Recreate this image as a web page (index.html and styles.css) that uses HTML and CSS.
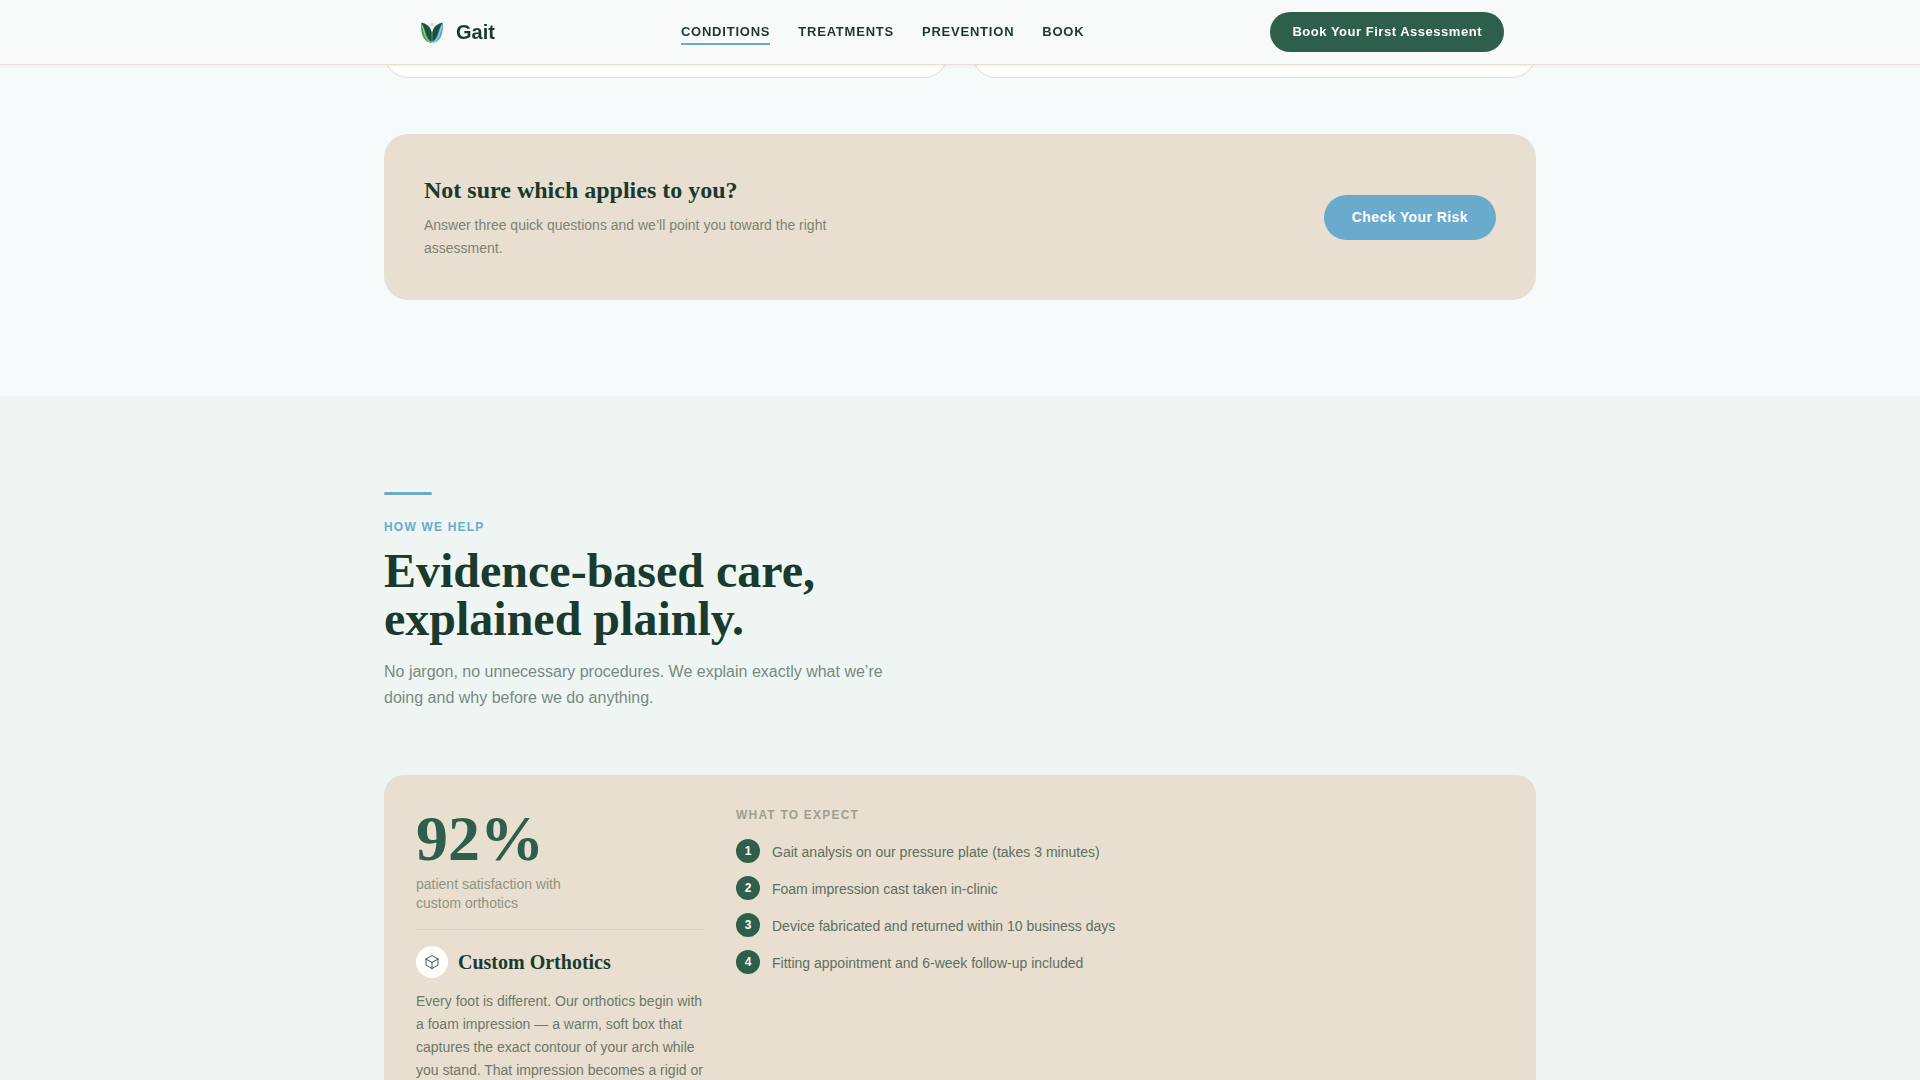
FILE: index.html
```html
<!DOCTYPE html>
<html lang="en">
<head>
<meta charset="utf-8">
<meta name="viewport" content="width=device-width, initial-scale=1">
<title>Gait</title>
<link rel="stylesheet" href="styles.css">
</head>
<body>
<header class="site-header">
  <div class="header-inner">
    <a class="brand" href="#">
      <svg class="brand-mark" viewBox="0 0 32 32" aria-hidden="true">
        <circle cx="16" cy="8.5" r="2" fill="#d5dcdb"/>
        <path d="M5 7L15.700 17V27C8 26.500 4.500 19 5 7Z" fill="#4f9a56"/>
        <path d="M27 7L16.300 17V27C24 26.500 27.500 19 27 7Z" fill="#58a8dc"/>
        <path d="M5 6.500C11 7.500 14.500 11 15.700 16V25.500C9 22 10.500 13 5 6.500Z" fill="#1b5238"/>
        <path d="M27 6.500C21 7.500 17.500 11 16.300 16V25.500C23 22 21.500 13 27 6.500Z" fill="#1b5238"/>
        <path d="M6 9.500C8.500 14 8 22 14 26M26 9.500C23.500 14 24 22 18 26" fill="none" stroke="#d9efe6" stroke-width=".7"/>
      </svg>
      <span>Gait</span>
    </a>
    <nav class="nav" aria-label="Main">
      <a class="nav-link is-active" href="#conditions">Conditions</a>
      <a class="nav-link" href="#treatments">Treatments</a>
      <a class="nav-link" href="#prevention">Prevention</a>
      <a class="nav-link" href="#book">Book</a>
    </nav>
    <button class="btn btn-book" type="button">Book Your First Assessment</button>
  </div>
</header>
<main class="page">
  <section class="conditions" id="conditions">
    <div class="container">
      <div class="condition-grid">
        <div class="condition-card"></div>
        <div class="condition-card"></div>
      </div>
      <div class="cta">
        <div class="cta-copy">
          <h3 class="cta-title">Not sure which applies to you?</h3>
          <p class="cta-text">Answer three quick questions and we’ll point you toward the right assessment.</p>
        </div>
        <button class="btn btn-risk" type="button">Check Your Risk</button>
      </div>
    </div>
  </section>
  <section class="treatments" id="treatments">
    <div class="container">
      <div class="accent-bar"></div>
      <p class="eyebrow">How we help</p>
      <h2 class="section-title">Evidence-based care, explained plainly.</h2>
      <p class="section-lead">No jargon, no unnecessary procedures. We explain exactly what we’re doing and why before we do anything.</p>
      <article class="treatment">
        <div class="treatment-main">
          <p class="stat">92%</p>
          <p class="stat-caption">patient satisfaction with custom orthotics</p>
          <div class="treatment-head">
            <span class="icon-circle">
              <svg class="icon" viewBox="0 0 24 24" fill="none" stroke="currentColor" stroke-width="1.500" stroke-linecap="round" stroke-linejoin="round" aria-hidden="true">
                <path d="M21 7.500l-9-5.250L3 7.500m18 0l-9 5.250m9-5.250v9l-9 5.250M3 7.500l9 5.250M3 7.500v9l9 5.250m0-9v9"/>
              </svg>
            </span>
            <h3 class="treatment-title">Custom Orthotics</h3>
          </div>
          <p class="treatment-text">Every foot is different. Our orthotics begin with a foam impression — a warm, soft box that captures the exact contour of your arch while you stand. That impression becomes a rigid or</p>
        </div>
        <div class="treatment-steps">
          <h4 class="steps-label">What to expect</h4>
          <ol class="steps">
            <li class="step"><span class="step-number">1</span><span class="step-text">Gait analysis on our pressure plate (takes 3 minutes)</span></li>
            <li class="step"><span class="step-number">2</span><span class="step-text">Foam impression cast taken in-clinic</span></li>
            <li class="step"><span class="step-number">3</span><span class="step-text">Device fabricated and returned within 10 business days</span></li>
            <li class="step"><span class="step-number">4</span><span class="step-text">Fitting appointment and 6-week follow-up included</span></li>
          </ol>
        </div>
      </article>
    </div>
  </section>
</main>
</body>
</html>
```
FILE: styles.css
```css
:root {
  --forest: #1a3a2e;
  --green: #2d5f4a;
  --sky: #6aabcd;
  --sand: #e8dfd0;
  --line: #e5e0d5;
  --mist: #f7fafb;
  --mint: #eef5f3;
  --sans: "Liberation Sans", Arial, sans-serif;
  --serif: "Liberation Serif", Georgia, serif;
}

* { box-sizing: border-box; }

body {
  margin: 0;
  background: var(--mist);
  color: var(--forest);
  font-family: var(--sans);
}

h2, h3, h4, p, ol { margin: 0; padding: 0; }

.page {
  height: 100vh;
  overflow-y: auto;
  scrollbar-width: none;
}

.container {
  max-width: 1152px;
  margin: 0 auto;
}

/* Header */
.site-header {
  position: fixed;
  inset: 0 0 auto 0;
  z-index: 10;
  background: #f8faf9;
  border-bottom: 1px solid var(--line);
  box-shadow: 0 1px 3px rgba(139, 115, 85, .12);
}

.header-inner {
  display: flex;
  align-items: center;
  justify-content: space-between;
  max-width: 1152px;
  height: 64px;
  margin: 0 auto;
  padding: 0 32px;
}

.brand {
  display: flex;
  align-items: center;
  gap: 8px;
  color: var(--forest);
  font-size: 20px;
  font-weight: 700;
  text-decoration: none;
}

.brand-mark { width: 32px; height: 32px; }

.nav { display: flex; gap: 28px; }

.nav-link {
  padding: 5px 0 3px;
  border-bottom: 2px solid transparent;
  color: var(--forest);
  font-size: 13px;
  font-weight: 700;
  line-height: 16px;
  letter-spacing: .06em;
  text-transform: uppercase;
  text-decoration: none;
}

.nav-link.is-active { border-bottom-color: var(--sky); }

.btn {
  border: 0;
  border-radius: 999px;
  color: #fff;
  font-family: var(--sans);
  font-weight: 700;
  cursor: pointer;
}

.btn-book {
  padding: 12px 22px 13px;
  background: var(--green);
  font-size: 13px;
  line-height: 15px;
  letter-spacing: .04em;
}

.btn-risk {
  flex-shrink: 0;
  height: 45px;
  padding: 0 28px;
  background: var(--sky);
  font-size: 14px;
  letter-spacing: .03em;
}

/* Conditions */
.conditions { padding-bottom: 96px; }

.condition-grid {
  display: grid;
  grid-template-columns: 1fr 1fr;
  gap: 24px;
  margin-bottom: 56px;
}

.condition-card {
  min-height: 78px;
  background: #fff;
  border: 1px solid var(--line);
  border-top: 0;
  border-radius: 0 0 24px 24px;
}

.cta {
  display: flex;
  align-items: center;
  justify-content: space-between;
  gap: 32px;
  padding: 40px;
  background: var(--sand);
  border-radius: 24px;
}

.cta-copy { max-width: 420px; }

.cta-title {
  margin-bottom: 8px;
  font-family: var(--serif);
  font-size: 24px;
  line-height: 32px;
}

.cta-text {
  color: #7b8472;
  font-size: 14px;
  line-height: 23px;
}

/* Treatments */
.treatments {
  padding: 96px 0;
  background: var(--mint);
}

.accent-bar {
  width: 48px;
  height: 3px;
  margin-bottom: 20px;
  background: var(--sky);
  border-radius: 2px;
}

.eyebrow {
  margin-bottom: 8px;
  color: var(--sky);
  font-size: 12px;
  font-weight: 700;
  line-height: 24px;
  letter-spacing: .1em;
  text-transform: uppercase;
}

.section-title {
  max-width: 520px;
  margin-bottom: 16px;
  font-family: var(--serif);
  font-size: 48px;
  line-height: 48px;
}

.section-lead {
  max-width: 520px;
  margin-bottom: 64px;
  color: #788a82;
  font-size: 16px;
  line-height: 26px;
}

.treatment {
  display: grid;
  grid-template-columns: 288px 1fr;
  gap: 32px;
  padding: 32px;
  background: var(--sand);
  border-radius: 20px;
}

.stat {
  margin-bottom: 4px;
  color: var(--green);
  font-family: var(--serif);
  font-size: 64px;
  font-weight: 700;
  line-height: 64px;
}

.stat-caption {
  max-width: 160px;
  color: #8f9482;
  font-size: 14px;
  line-height: 19px;
}

.treatment-head {
  display: flex;
  align-items: center;
  gap: 10px;
  margin: 16px 0 12px;
  padding-top: 16px;
  border-top: 1px solid #d8d2c2;
}

.icon-circle {
  display: grid;
  place-items: center;
  width: 32px;
  height: 32px;
  border-radius: 50%;
  background: #fff;
  color: var(--green);
}

.icon { width: 16px; height: 16px; }

.treatment-title {
  font-family: var(--serif);
  font-size: 20px;
  line-height: 24px;
}

.treatment-text {
  color: #6c7868;
  font-size: 14px;
  line-height: 23px;
}

.steps-label {
  margin-bottom: 16px;
  color: #9da08e;
  font-size: 12px;
  line-height: 16px;
  letter-spacing: .1em;
  text-transform: uppercase;
}

.steps {
  display: grid;
  gap: 12px;
  list-style: none;
}

.step { display: flex; gap: 12px; }

.step-number {
  flex: none;
  width: 24px;
  height: 24px;
  border-radius: 50%;
  background: var(--green);
  color: #fff;
  font-size: 12px;
  font-weight: 700;
  line-height: 24px;
  text-align: center;
}

.step-text {
  padding-top: 2px;
  color: #5f6e5f;
  font-size: 14px;
  line-height: 23px;
}

@media (max-width: 900px) {
  .container { padding: 0 16px; }
  .nav { display: none; }
  .cta { flex-direction: column; align-items: flex-start; }
  .treatment { grid-template-columns: 1fr; }
}
```
